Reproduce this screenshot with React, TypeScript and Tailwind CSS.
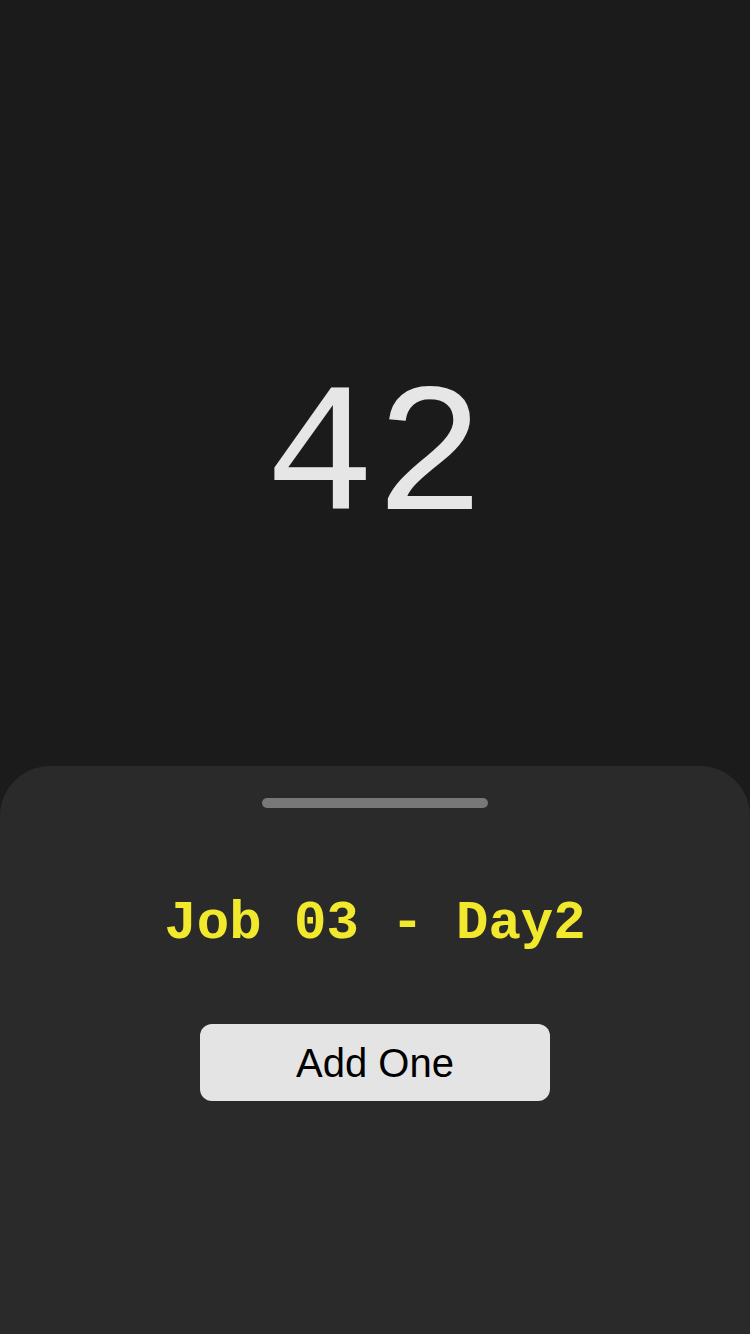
import { useState } from 'react';

export default function App() {
  const [count, setCount] = useState(42);

  return (
    <div className="w-[750px] h-[1334px] bg-[#1b1b1b] flex flex-col overflow-hidden">
      <div className="h-[766px] flex justify-center pt-[369px]">
        <div className="text-[183px] leading-[183px] h-[183px] text-[#e6e6e6] font-['Liberation_Mono',monospace]">
          {count}
        </div>
      </div>

      <div className="flex-1 bg-[#2a2a2a] rounded-t-[50px] flex flex-col items-center">
        <div className="mt-[32px] w-[226px] h-[10px] rounded-full bg-[#787878]" />
        <div className="mt-[86px] text-[54px] leading-[60px] font-bold text-[#f2e92d] font-['Liberation_Mono',monospace]">
          Job 03 - Day2
        </div>
        <button
          onClick={() => setCount(count + 1)}
          className="mt-[70px] w-[350px] h-[77px] rounded-[12px] bg-[#e4e4e4] text-black text-[40px] font-['Liberation_Sans',Arial,sans-serif]"
        >
          Add One
        </button>
      </div>
    </div>
  );
}
